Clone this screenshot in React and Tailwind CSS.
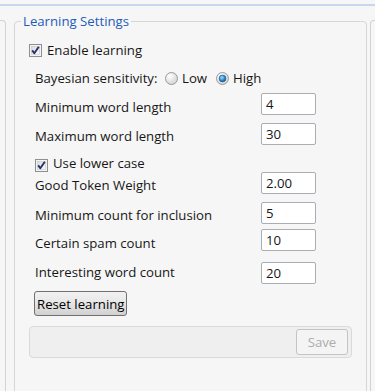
import React from "react";

function CheckBox() {
  return (
    <svg width="13" height="13" viewBox="0 0 13 13" className="shrink-0">
      <defs>
        <linearGradient id="cbFill" x1="0" y1="0" x2="1" y2="1">
          <stop offset="0" stopColor="#dcdcdc" />
          <stop offset="1" stopColor="#fbfbfb" />
        </linearGradient>
      </defs>
      <rect x="0.5" y="0.5" width="12" height="12" fill="#f4f4f4" stroke="#8e8f8f" />
      <rect x="2.5" y="2.5" width="8" height="8" fill="url(#cbFill)" stroke="#c6c6c6" strokeWidth="0.6" />
      <path d="M3.2 6.4 L5.3 9.2 L9.8 2.8" fill="none" stroke="#25306f" strokeWidth="1.9" strokeLinejoin="round" />
    </svg>
  );
}

function Radio({ checked }) {
  return (
    <svg width="13" height="13" viewBox="0 0 13 13" className="shrink-0">
      <defs>
        <radialGradient id="rbOff" cx="0.35" cy="0.3" r="0.8">
          <stop offset="0" stopColor="#ffffff" />
          <stop offset="1" stopColor="#cfcfcf" />
        </radialGradient>
        <radialGradient id="rbOn" cx="0.4" cy="0.35" r="0.7">
          <stop offset="0" stopColor="#9be2fb" />
          <stop offset="0.6" stopColor="#2f8bc9" />
          <stop offset="1" stopColor="#1a4f8f" />
        </radialGradient>
      </defs>
      <circle cx="6.5" cy="6.5" r="6" fill="url(#rbOff)" stroke="#9a9a9a" />
      {checked && <circle cx="6.5" cy="6.5" r="3.4" fill="url(#rbOn)" stroke="#1f4f86" strokeWidth="0.6" />}
    </svg>
  );
}

const rows = [
  { label: "Minimum word length", value: "4", h: "h-[30px]", pt: "pt-[4px]" },
  { label: "Maximum word length", value: "30", h: "h-[30px]", pt: "pt-[3px]" },
  { check: "Use lower case", h: "h-[19px]" },
  { label: "Good Token Weight", value: "2.00", h: "h-[30px]", pt: "pt-[3px]" },
  { label: "Minimum count for inclusion", value: "5", h: "h-[27px]", pt: "pt-[3px]" },
  { label: "Certain spam count", value: "10", h: "h-[33px]", pt: "pt-[4px]" },
  { label: "Interesting word count", value: "20", h: "h-[22px]", pt: "pt-0" },
];

export default function App() {
  return (
    <div className="w-[375px] h-[391px] overflow-hidden bg-[#f6f6f6] text-[13.2px] leading-[20px] text-[#161616] font-['Open_Sans',sans-serif]">
      <div className="h-[4px]" />
      <div className="h-[2px] bg-[#c6d7ee]" />
      <div className="flex items-start mt-[5px]">
        <div className="mt-[9px] w-[6px] h-[380px] border-t border-r border-[#d3d3d3] rounded-tr-[4px]" />
        <fieldset className="ml-[8px] w-[353px] h-[400px] border border-[#d6d6d6] rounded-[4px]">
          <legend className="ml-[6px] px-[2px] text-[#1f5cb8] leading-[20px]">Learning Settings</legend>
          <div className="px-[14px] pt-[9px]">
            <div className="flex items-center h-[20px] gap-[5px]">
              <CheckBox />
              <span>Enable learning</span>
            </div>
            <div className="flex items-center h-[20px] mt-[8px] pl-[6px]">
              <span className="w-[130px]">Bayesian sensitivity:</span>
              <Radio />
              <span className="ml-[4px] w-[34px]">Low</span>
              <Radio checked />
              <span className="ml-[4px]">High</span>
            </div>
            <div className="mt-[5px] pl-[6px]">
              {rows.map((r) =>
                r.check ? (
                  <div key={r.check} className={`flex items-start gap-[5px] ${r.h}`}>
                    <div className="mt-[6px]">
                      <CheckBox />
                    </div>
                    <span>{r.check}</span>
                  </div>
                ) : (
                  <div key={r.label} className={`flex items-start ${r.h}`}>
                    <span className={`w-[226px] ${r.pt}`}>{r.label}</span>
                    <div className="w-[55px] h-[22px] bg-white border border-[#abadb3] rounded-[2px] pl-[4px] leading-[20px]">
                      {r.value}
                    </div>
                  </div>
                )
              )}
              <button className="mt-[7px] -ml-px h-[25px] px-[2px] border border-[#707070] rounded-[3px] bg-gradient-to-b from-[#f2f2f2] via-[#e6e6e6] to-[#d0d0d0] text-[13.2px] leading-[20px] text-black">
                Reset learning
              </button>
            </div>
            <div className="mt-[10px] h-[32px] bg-[#efefef] border border-[#dadada] rounded-[4px] flex justify-end items-start pt-[2px] pr-[3px]">
              <button className="w-[52px] h-[26px] border border-[#c2c4c6] rounded-[3px] bg-[#f4f4f4] text-[#acacac] text-[13.2px] leading-[20px]">
                Save
              </button>
            </div>
          </div>
        </fieldset>
        <div className="mt-[9px] ml-[3px] flex-1 h-[380px] border-t border-l border-[#d3d3d3] rounded-tl-[4px]" />
      </div>
    </div>
  );
}
